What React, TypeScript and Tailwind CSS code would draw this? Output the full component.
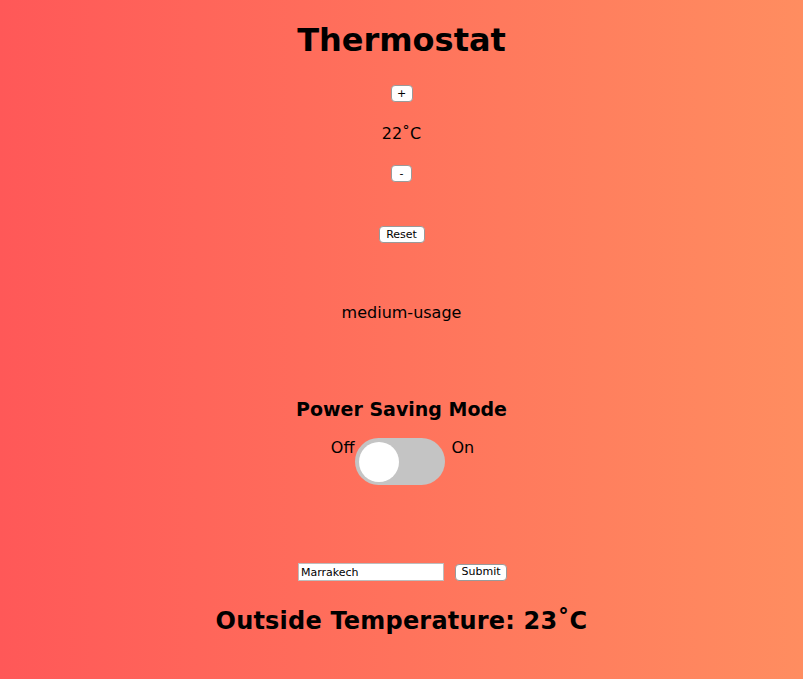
import React from "react";

export default function App() {
  const btn =
    "bg-white border border-[#9a9a9a] rounded-[4px] text-[11px] leading-[14px] text-black h-[17px] flex items-center justify-center";
  return (
    <div
      className="min-h-screen w-full bg-[linear-gradient(to_right,#ff5858,#ff8d60)] flex flex-col items-center text-black"
      style={{ fontFamily: '"DejaVu Sans", Verdana, sans-serif' }}
    >
      <h1 className="mt-[22px] text-[32px] leading-[37px] font-bold">Thermostat</h1>
      <button className={btn + " mt-[26px] w-[22px] px-0"}>+</button>
      <div className="mt-[22px] text-[16px] leading-[19px]">22˚C</div>
      <button className={btn + " mt-[22px] w-[21px] px-0"}>-</button>
      <button className={btn + " mt-[44px] w-[46px] px-0"}>Reset</button>
      <div className="mt-[60px] text-[16px] leading-[19px]">medium-usage</div>
      <h3 className="mt-[76px] text-[19px] leading-[22px] font-bold">Power Saving Mode</h3>
      <div className="mt-[18px] flex items-start ml-[2px]">
        <span className="text-[16px] leading-[20px] mr-[1px]">Off</span>
        <div className="relative w-[90px] h-[47px] rounded-full bg-[#c4c4c4]">
          <div className="absolute left-[4px] top-[4px] w-[40px] h-[40px] rounded-full bg-white" />
        </div>
        <span className="text-[16px] leading-[20px] ml-[6px]">On</span>
      </div>
      <div className="mt-[78px] flex items-center ml-[2px]">
        <input
          defaultValue="Marrakech"
          className="w-[146px] h-[18px] bg-white border border-[#bdbdbd] text-[11px] px-[2px] text-black outline-none"
          style={{ fontFamily: '"DejaVu Sans", Verdana, sans-serif' }}
        />
        <button className={btn + " ml-[11px] w-[52px] px-0"}>Submit</button>
      </div>
      <h2 className="mt-[26px] text-[24px] leading-[28px] font-bold tracking-[0.2px]">Outside Temperature: 23˚C</h2>
    </div>
  );
}
